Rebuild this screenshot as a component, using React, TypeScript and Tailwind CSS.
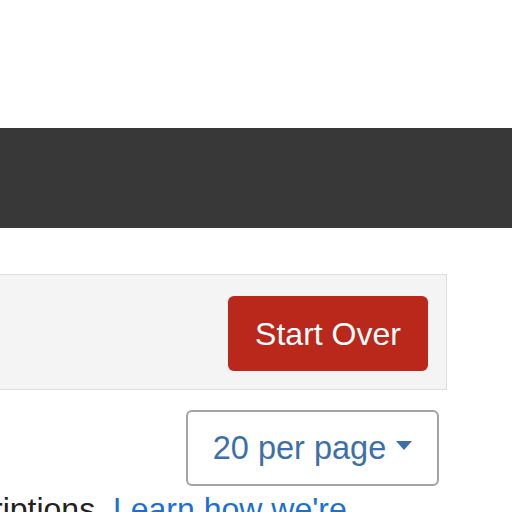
import React from "react";

function Caret() {
    return (
        <svg width="16" height="9" viewBox="0 0 16 9" className="ml-[10px] mt-[-6px]">
            <path d="M0 0 L16 0 L8 9 Z" fill="#3d6fa8" />
        </svg>
    );
}

export default function App() {
    return (
        <div className="w-[512px] h-[512px] overflow-hidden bg-white font-['Liberation_Sans',Arial,sans-serif]">
            <div className="h-[128px]" />
            <div className="h-[100px] bg-[#383838]" />
            <div className="pt-[46px]">
                <div className="ml-[-10px] w-[457px] h-[116px] bg-[#f4f4f4] border border-[#dedede] flex justify-end pt-[21px] pr-[18px]">
                    <button className="h-[75px] w-[200px] rounded-[6px] bg-[#ba271b] text-white text-[32px] leading-none">
                        Start Over
                    </button>
                </div>
                <div className="flex justify-end pr-[73px] pt-[20px]">
                    <button className="h-[76px] w-[253px] rounded-[6px] border-2 border-[#a3a3a3] bg-white flex items-center justify-center text-[32.5px] text-[#3d6fa8] leading-none">
                        <span>20 per page</span>
                        <Caret />
                    </button>
                </div>
                <div className="ml-[-8px] mt-[7px] whitespace-nowrap text-[32px] leading-none text-[#222]">
                    riptions. <span className="text-[#1a6fd8]">Learn how we're</span>
                </div>
            </div>
        </div>
    );
}
